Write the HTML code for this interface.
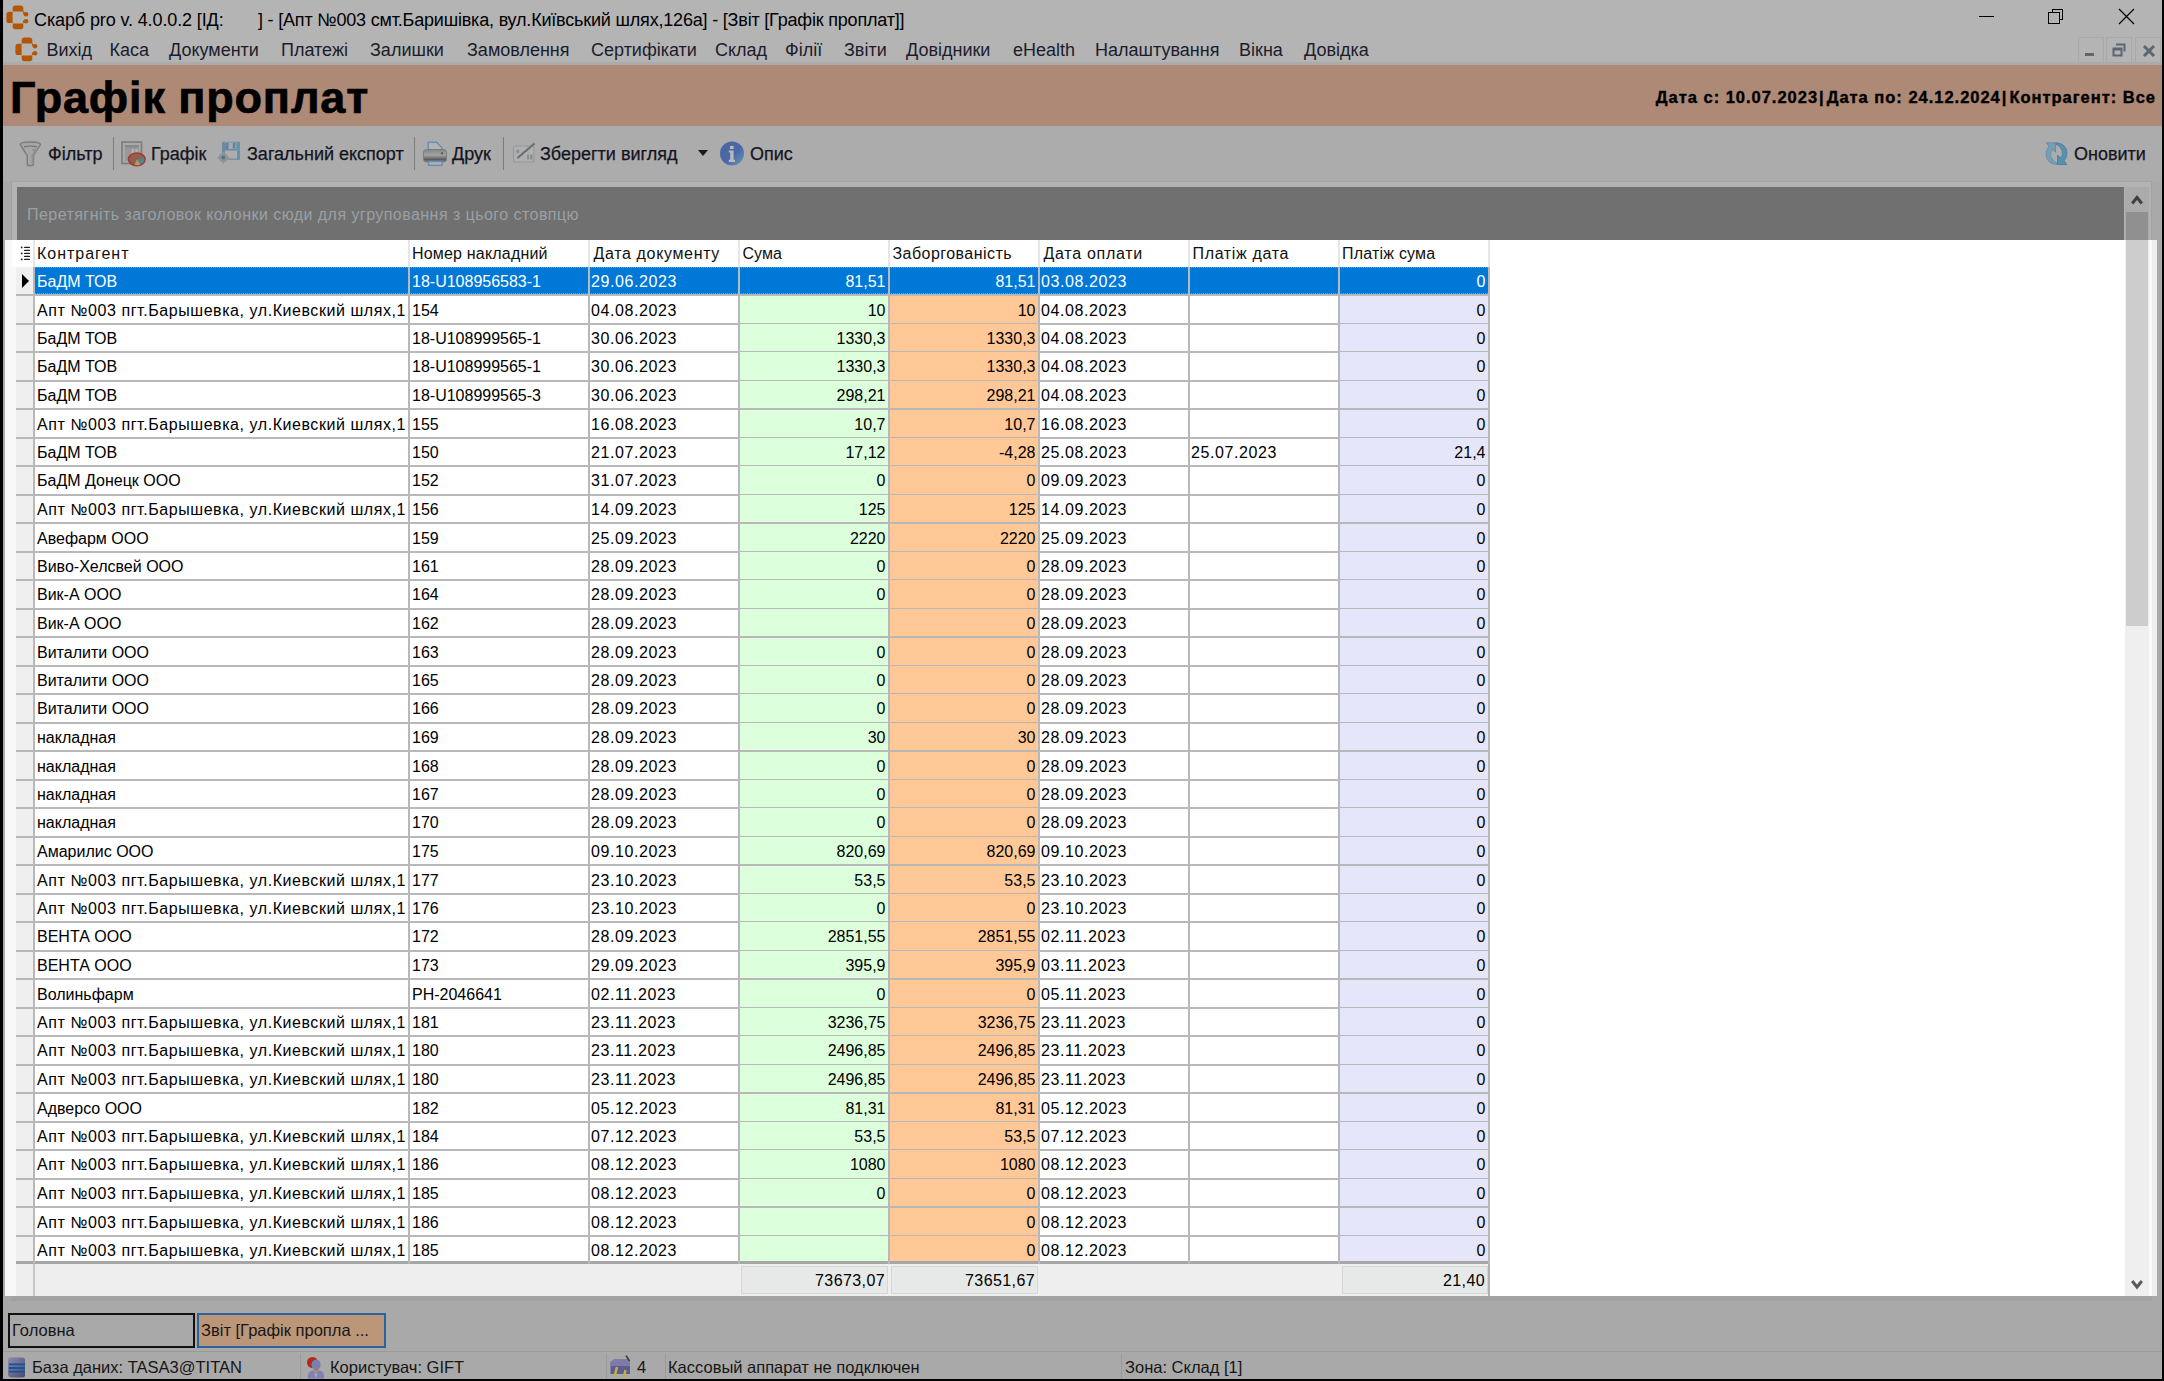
<!DOCTYPE html><html><head><meta charset="utf-8"><title>Графік проплат</title><style>
*{box-sizing:border-box;margin:0;padding:0}
html,body{width:2164px;height:1381px;overflow:hidden;background:#a9a9a9;font-family:"Liberation Sans",sans-serif;color:#000}
.a{position:absolute}
.t{position:absolute;white-space:pre;line-height:1}
</style></head><body><div class="a" style="left:0;top:0;width:2164px;height:65px;background:#b4b4b4"></div>
<div class="a" style="left:0;top:62px;width:2164px;height:3px;background:#ababab"></div>
<svg class="a" style="left:6px;top:4.5px" width="24" height="26" viewBox="0 0 24 26"><g fill="#b45503"><path d="M6.7 6.4V3.2Q6.7 0.5 9.5 0.5H14.5Q17.3 0.5 17.3 3.2V6.4Z"/><path d="M6.6 6.7H3.2Q0.4 6.7 0.4 9.8V15.2Q0.4 18.1 3.2 18.1H6.6Z"/><path d="M6.7 18.4H17.3V21.4Q17.3 24.2 14.5 24.2H9.5Q6.7 24.2 6.7 21.4Z"/><circle cx="20" cy="9.2" r="2.3"/><circle cx="20" cy="16.3" r="2.3"/><path d="M16.5 5.5L18.5 7.5L20 8L17.5 9.5Z"/><path d="M16.5 19L18.5 17L20 16.5L17.5 15Z"/></g></svg>
<svg class="a" style="left:14.6px;top:36.5px" width="24" height="26" viewBox="0 0 24 26"><g fill="#b45503"><path d="M6.7 6.4V3.2Q6.7 0.5 9.5 0.5H14.5Q17.3 0.5 17.3 3.2V6.4Z"/><path d="M6.6 6.7H3.2Q0.4 6.7 0.4 9.8V15.2Q0.4 18.1 3.2 18.1H6.6Z"/><path d="M6.7 18.4H17.3V21.4Q17.3 24.2 14.5 24.2H9.5Q6.7 24.2 6.7 21.4Z"/><circle cx="20" cy="9.2" r="2.3"/><circle cx="20" cy="16.3" r="2.3"/><path d="M16.5 5.5L18.5 7.5L20 8L17.5 9.5Z"/><path d="M16.5 19L18.5 17L20 16.5L17.5 15Z"/></g></svg>
<div class="t" style="left:34px;top:11px;font-size:18px;color:#000;letter-spacing:-0.12px">Скарб pro v. 4.0.0.2 [ІД:</div>
<div class="t" style="left:258px;top:11px;font-size:18px;color:#000;letter-spacing:-0.19px">] - [Апт №003 смт.Баришівка, вул.Київський шлях,126а] - [Звіт [Графік проплат]]</div>
<div class="a" style="left:1979px;top:16px;width:15px;height:1px;background:#000"></div>
<div class="a" style="left:2052px;top:9px;width:11px;height:11px;border:1px solid #000"></div>
<div class="a" style="left:2048px;top:12px;width:12px;height:12px;border:1px solid #000;background:#b4b4b4"></div>
<svg class="a" style="left:2118px;top:8px" width="17" height="17" viewBox="0 0 17 17"><path d="M1 1L16 16M16 1L1 16" stroke="#000" stroke-width="1.2"/></svg>
<div class="t" style="left:46.5px;top:41px;font-size:18px;color:#1c1c2c">Вихід</div>
<div class="t" style="left:109.5px;top:41px;font-size:18px;color:#1c1c2c">Каса</div>
<div class="t" style="left:169px;top:41px;font-size:18px;color:#1c1c2c">Документи</div>
<div class="t" style="left:281px;top:41px;font-size:18px;color:#1c1c2c">Платежі</div>
<div class="t" style="left:370px;top:41px;font-size:18px;color:#1c1c2c">Залишки</div>
<div class="t" style="left:467px;top:41px;font-size:18px;color:#1c1c2c">Замовлення</div>
<div class="t" style="left:591px;top:41px;font-size:18px;color:#1c1c2c">Сертифікати</div>
<div class="t" style="left:715px;top:41px;font-size:18px;color:#1c1c2c">Склад</div>
<div class="t" style="left:785px;top:41px;font-size:18px;color:#1c1c2c">Філії</div>
<div class="t" style="left:844px;top:41px;font-size:18px;color:#1c1c2c">Звіти</div>
<div class="t" style="left:906px;top:41px;font-size:18px;color:#1c1c2c">Довідники</div>
<div class="t" style="left:1013px;top:41px;font-size:18px;color:#1c1c2c">eHealth</div>
<div class="t" style="left:1095px;top:41px;font-size:18px;color:#1c1c2c">Налаштування</div>
<div class="t" style="left:1239px;top:41px;font-size:18px;color:#1c1c2c">Вікна</div>
<div class="t" style="left:1304px;top:41px;font-size:18px;color:#1c1c2c">Довідка</div>
<div class="a" style="left:2078px;top:37px;width:26px;height:26px;border:1px solid #a9a9a9;background:#b4b4b4"></div>
<div class="a" style="left:2106px;top:37px;width:26px;height:26px;border:1px solid #a9a9a9;background:#b4b4b4"></div>
<div class="a" style="left:2135px;top:37px;width:26px;height:26px;border:1px solid #a9a9a9;background:#b4b4b4"></div>
<div class="a" style="left:2085px;top:53px;width:9px;height:3px;background:#5a6670"></div>
<svg class="a" style="left:2112px;top:43px" width="14" height="14" viewBox="0 0 14 14"><path d="M4 1.5H12.5V8.5" fill="none" stroke="#5a6670" stroke-width="2"/><rect x="1.5" y="5.5" width="8" height="7" fill="none" stroke="#5a6670" stroke-width="2"/><rect x="1.5" y="5" width="8" height="2.5" fill="#5a6670"/></svg>
<svg class="a" style="left:2142px;top:44px" width="14" height="14" viewBox="0 0 14 14"><path d="M2 2L12 12M12 2L2 12" stroke="#5a6670" stroke-width="3"/></svg>
<div class="a" style="left:0;top:65px;width:2164px;height:61px;background:#ae8a76"></div>
<div class="t" style="left:10px;top:75px;font-size:45px;font-weight:bold;color:#000;letter-spacing:0.85px;word-spacing:-1px;-webkit-text-stroke:0.7px #000">Графік проплат</div>
<div class="t" style="right:8px;top:89px;font-size:16.5px;font-weight:bold;color:#000;letter-spacing:0.98px;-webkit-text-stroke:0.4px #000">Дата с: 10.07.2023<span style="margin:0 2px 0 1px">|</span>Дата по: 24.12.2024<span style="margin:0 2px 0 1px">|</span>Контрагент: Все</div>
<div class="a" style="left:0;top:126px;width:2164px;height:56px;background:#acacac"></div>
<div class="t" style="left:48px;top:145px;font-size:18px;color:#141420;-webkit-text-stroke:0.25px #141420">Фільтр</div>
<div class="t" style="left:151px;top:145px;font-size:18px;color:#141420;-webkit-text-stroke:0.25px #141420">Графік</div>
<div class="t" style="left:247px;top:145px;font-size:18px;color:#141420;-webkit-text-stroke:0.25px #141420">Загальний експорт</div>
<div class="t" style="left:452px;top:145px;font-size:18px;color:#141420;-webkit-text-stroke:0.25px #141420">Друк</div>
<div class="t" style="left:540px;top:145px;font-size:18px;color:#141420;-webkit-text-stroke:0.25px #141420">Зберегти вигляд</div>
<div class="t" style="left:750px;top:145px;font-size:18px;color:#141420;-webkit-text-stroke:0.25px #141420">Опис</div>
<div class="t" style="left:2074px;top:145px;font-size:18px;color:#141420;-webkit-text-stroke:0.25px #141420">Оновити</div>
<div class="a" style="left:113px;top:137px;width:1px;height:33px;background:#7c7c7c"></div>
<div class="a" style="left:414px;top:137px;width:1px;height:33px;background:#7c7c7c"></div>
<div class="a" style="left:503px;top:137px;width:1px;height:33px;background:#7c7c7c"></div>
<svg class="a" style="left:698px;top:150px" width="10" height="6" viewBox="0 0 10 6"><path d="M0 0H10L5 6Z" fill="#1a1a1a"/></svg>
<svg class="a" style="left:719px;top:141px" width="26" height="26" viewBox="0 0 26 26"><defs><linearGradient id="ig" x1="0" y1="0" x2="1" y2="1"><stop offset="0" stop-color="#4d66a0"/><stop offset="0.55" stop-color="#4a68a6"/><stop offset="1" stop-color="#6e96b8"/></linearGradient></defs><circle cx="13" cy="12.5" r="12" fill="url(#ig)"/><rect x="11" y="5" width="3.6" height="3" fill="#b9b9b9"/><path d="M9.8 9.6H14.6V18.8H16V21H9.8V18.8H11.2V11.6H9.8Z" fill="#b9b9b9"/></svg>
<svg class="a" style="left:19px;top:141px" width="23" height="26" viewBox="0 0 23 26"><path d="M1.2 3.5Q1.2 1 11.3 1Q21.4 1 21.4 3.5L14.5 14.5V23Q14.5 24.8 11.3 24.8Q8.2 24.8 8.2 23V14.5Z" fill="#a6a6a6" stroke="#7c7c7c" stroke-width="1.4"/><path d="M5 5.8Q11.3 4.2 17.6 5.8" fill="none" stroke="#6e6e6e" stroke-width="1.2"/><path d="M13 9L17 9L13.5 14.5V22" fill="none" stroke="#909090" stroke-width="2"/></svg>
<svg class="a" style="left:121px;top:141px" width="26" height="26" viewBox="0 0 26 26"><rect x="1" y="1" width="19.5" height="21.5" fill="#a9a9a9" stroke="#7c7c7c" stroke-width="1.6"/><rect x="4" y="4" width="14" height="16" fill="#989898"/><rect x="4" y="4" width="14" height="2.5" fill="#888"/><rect x="10.5" y="8" width="2.5" height="5" fill="#b2b2b2"/><rect x="14.5" y="8" width="2.5" height="5" fill="#b2b2b2"/><ellipse cx="15.8" cy="18.3" rx="8.3" ry="6.3" fill="#93604e" stroke="#a23a3a" stroke-width="1.6"/><path d="M16 18.5L23 16.8A7 5 0 0 1 19.5 23Z" fill="#4f8598"/><path d="M16 18.5L19.5 23.5A7 5 0 0 1 13.5 23.8Z" fill="#a4a25e"/></svg>
<svg class="a" style="left:217px;top:140px" width="26" height="26" viewBox="0 0 26 26"><rect x="5" y="1.7" width="18" height="18" rx="1" fill="#6f889e"/><rect x="19.5" y="2" width="3.5" height="17.5" fill="#6294ac"/><rect x="8" y="2.5" width="11.5" height="6.5" fill="#a6aaac"/><rect x="8.3" y="3" width="3.2" height="6" fill="#5d82a2"/><rect x="15.8" y="3" width="2.6" height="5.5" fill="#5d82a2"/><rect x="8" y="10.5" width="12" height="8" fill="#adadad"/><circle cx="6.3" cy="17.7" r="4.6" fill="#8f9496"/><path d="M6.3 11.8V23.6M0.4 17.7H12.2" stroke="#8f9496" stroke-width="2"/><circle cx="6.3" cy="17.5" r="1.9" fill="#4e7590"/></svg>
<svg class="a" style="left:422px;top:141px" width="26" height="26" viewBox="0 0 26 26"><defs><linearGradient id="pg" x1="0" y1="0" x2="0" y2="1"><stop offset="0" stop-color="#858585"/><stop offset="0.45" stop-color="#a3a3a3"/><stop offset="0.8" stop-color="#5c5c5c"/><stop offset="1" stop-color="#7c7c7c"/></linearGradient></defs><path d="M6.2 1.2H14.5L19.8 6.5V9H6.2Z" fill="#b0b4b9" stroke="#6d8db2" stroke-width="1.5"/><rect x="1.5" y="8.5" width="23" height="12.5" rx="3" fill="url(#pg)" stroke="#7c7c7c" stroke-width="1"/><circle cx="20" cy="12.3" r="1.1" fill="#4e4e4e"/><rect x="6.5" y="20.5" width="13.5" height="3.8" fill="#b0b4b9" stroke="#6d8db2" stroke-width="1.5"/></svg>
<svg class="a" style="left:512px;top:141px" width="24" height="23" viewBox="0 0 24 23"><rect x="1.5" y="5" width="20.5" height="16" rx="2" fill="#aeb0b4" stroke="#96989c" stroke-width="1.2"/><path d="M5.5 17L22.5 2.5" stroke="#6c6c68" stroke-width="2"/><ellipse cx="5.8" cy="10.5" rx="1.6" ry="2" fill="#8c8e92"/><rect x="15" y="13.5" width="2.2" height="5" fill="#7f8f9f"/><rect x="18.2" y="13.5" width="2.2" height="5" fill="#7f8f7f"/></svg>
<svg class="a" style="left:2045px;top:142px" width="23" height="23" viewBox="0 0 23 23"><path d="M1 0.8H10.5V10.3L7.5 7.3Q4.5 10.5 6 15Q7.5 19.5 12 21V22.5Q4.5 22 2 16.5Q-0.5 10.5 4 4Z" fill="#789eb6" stroke="#5a88b0" stroke-width="0.8"/><path d="M22 22.5H12.5V13L15.5 16Q18.5 12.8 17 8.3Q15.5 3.8 11 2.3V0.8Q18.5 1.3 21 6.8Q23.5 12.8 19 19Z" fill="#5890b2" stroke="#4a78a0" stroke-width="0.8"/></svg>
<div class="a" style="left:11px;top:181px;width:2141px;height:1120px;border:1px solid #a2a2a2;background:#b3b3b3"></div>
<div class="a" style="left:17px;top:187px;width:2107px;height:53px;background:#707070"></div>
<div class="t" style="left:27px;top:207px;font-size:16px;color:#9aa0a6;letter-spacing:0.45px">Перетягніть заголовок колонки сюди для угруповання з цього стовпцю</div>
<div class="a" style="left:2125px;top:187px;width:24px;height:53px;background:#ababab"></div>
<div class="a" style="left:2126px;top:212px;width:22px;height:28px;background:#909090"></div>
<svg class="a" style="left:2131px;top:194px" width="12" height="12" viewBox="0 0 12 12"><path d="M1.2 9.5L6 3.5L10.8 9.5" fill="none" stroke="#404040" stroke-width="3"/></svg>
<div class="a" style="left:5px;top:240px;width:2152px;height:1056px;background:#f8f8f8"></div>
<div class="a" style="left:16px;top:240px;width:2109px;height:1056px;background:#ffffff"></div>
<div class="a" style="left:16px;top:267px;width:17px;height:1029px;background:#efefef"></div>
<div class="a" style="left:12px;top:240px;width:21px;height:27px;background:#ffffff"></div>
<svg class="a" style="left:20px;top:246px" width="12" height="15" viewBox="0 0 12 15"><g fill="#1e1e1e"><rect x="4" y="0.7" width="6" height="1.4" rx="0.7"/><rect x="4" y="3.7" width="6" height="1.4" rx="0.7"/><rect x="4" y="6.7" width="6" height="1.4" rx="0.7"/><rect x="4" y="9.7" width="6" height="1.4" rx="0.7"/><rect x="4" y="12.7" width="6" height="1.4" rx="0.7"/><circle cx="1.7" cy="1.4" r="0.9"/><circle cx="1.7" cy="7.4" r="0.9"/><circle cx="1.7" cy="13.4" r="0.9"/></g></svg>
<div class="t" style="left:37px;top:246px;font-size:16px;color:#101010;letter-spacing:0.97px">Контрагент</div>
<div class="a" style="left:408px;top:240px;width:2px;height:27px;background:#e6e6e6"></div>
<div class="t" style="left:412px;top:246px;font-size:16px;color:#101010;letter-spacing:0.19px">Номер накладний</div>
<div class="a" style="left:588px;top:240px;width:2px;height:27px;background:#e6e6e6"></div>
<div class="t" style="left:593.5px;top:246px;font-size:16px;color:#101010;letter-spacing:0.65px">Дата документу</div>
<div class="a" style="left:738px;top:240px;width:2px;height:27px;background:#e6e6e6"></div>
<div class="t" style="left:742.5px;top:246px;font-size:16px;color:#101010;letter-spacing:0px">Сума</div>
<div class="a" style="left:888px;top:240px;width:2px;height:27px;background:#e6e6e6"></div>
<div class="t" style="left:892.5px;top:246px;font-size:16px;color:#101010;letter-spacing:0.45px">Заборгованість</div>
<div class="a" style="left:1038px;top:240px;width:2px;height:27px;background:#e6e6e6"></div>
<div class="t" style="left:1043.5px;top:246px;font-size:16px;color:#101010;letter-spacing:0.71px">Дата оплати</div>
<div class="a" style="left:1188px;top:240px;width:2px;height:27px;background:#e6e6e6"></div>
<div class="t" style="left:1192.5px;top:246px;font-size:16px;color:#101010;letter-spacing:0.65px">Платіж дата</div>
<div class="a" style="left:1338px;top:240px;width:2px;height:27px;background:#e6e6e6"></div>
<div class="t" style="left:1342px;top:246px;font-size:16px;color:#101010;letter-spacing:0.21px">Платіж сума</div>
<div class="a" style="left:1488px;top:240px;width:2px;height:27px;background:#e6e6e6"></div>
<div class="a" style="left:33px;top:240px;width:2px;height:27px;background:#e6e6e6"></div>
<div class="a" style="left:35px;top:267px;width:373px;height:27px;background:#0078d7"></div>
<div class="t" style="left:37px;top:274px;font-size:16px;color:#ffffff">БаДМ ТОВ</div>
<div class="a" style="left:410px;top:267px;width:178px;height:27px;background:#0078d7"></div>
<div class="t" style="left:412px;top:274px;font-size:16px;color:#ffffff">18-U108956583-1</div>
<div class="a" style="left:590px;top:267px;width:148px;height:27px;background:#0078d7"></div>
<div class="t" style="left:591px;top:274px;font-size:16px;color:#ffffff;letter-spacing:0.6px">29.06.2023</div>
<div class="a" style="left:740px;top:267px;width:148px;height:27px;background:#0078d7"></div>
<div class="t" style="left:740px;top:274px;width:145.5px;text-align:right;font-size:16px;color:#ffffff">81,51</div>
<div class="a" style="left:890px;top:267px;width:148px;height:27px;background:#0078d7"></div>
<div class="t" style="left:890px;top:274px;width:145.5px;text-align:right;font-size:16px;color:#ffffff">81,51</div>
<div class="a" style="left:1040px;top:267px;width:148px;height:27px;background:#0078d7"></div>
<div class="t" style="left:1041px;top:274px;font-size:16px;color:#ffffff;letter-spacing:0.6px">03.08.2023</div>
<div class="a" style="left:1190px;top:267px;width:148px;height:27px;background:#0078d7"></div>
<div class="a" style="left:1340px;top:267px;width:148px;height:27px;background:#0078d7"></div>
<div class="t" style="left:1340px;top:274px;width:145.5px;text-align:right;font-size:16px;color:#ffffff">0</div>
<div class="a" style="left:16px;top:294px;width:1474px;height:2px;background:#b8b8b8"></div>
<div class="t" style="left:37px;top:303px;font-size:16px;color:#000;letter-spacing:0.56px">Апт №003 пгт.Барышевка, ул.Киевский шлях,1</div>
<div class="t" style="left:412px;top:303px;font-size:16px;color:#000">154</div>
<div class="t" style="left:591px;top:303px;font-size:16px;color:#000;letter-spacing:0.6px">04.08.2023</div>
<div class="a" style="left:740px;top:296px;width:148px;height:27px;background:#dcffdc"></div>
<div class="t" style="left:740px;top:303px;width:145.5px;text-align:right;font-size:16px;color:#000">10</div>
<div class="a" style="left:890px;top:296px;width:148px;height:27px;background:#ffc896"></div>
<div class="t" style="left:890px;top:303px;width:145.5px;text-align:right;font-size:16px;color:#000">10</div>
<div class="t" style="left:1041px;top:303px;font-size:16px;color:#000;letter-spacing:0.6px">04.08.2023</div>
<div class="a" style="left:1340px;top:296px;width:148px;height:27px;background:#e6e6fa"></div>
<div class="t" style="left:1340px;top:303px;width:145.5px;text-align:right;font-size:16px;color:#000">0</div>
<div class="a" style="left:16px;top:323px;width:1474px;height:2px;background:#b8b8b8"></div>
<div class="t" style="left:37px;top:331px;font-size:16px;color:#000">БаДМ ТОВ</div>
<div class="t" style="left:412px;top:331px;font-size:16px;color:#000">18-U108999565-1</div>
<div class="t" style="left:591px;top:331px;font-size:16px;color:#000;letter-spacing:0.6px">30.06.2023</div>
<div class="a" style="left:740px;top:324px;width:148px;height:27px;background:#dcffdc"></div>
<div class="t" style="left:740px;top:331px;width:145.5px;text-align:right;font-size:16px;color:#000">1330,3</div>
<div class="a" style="left:890px;top:324px;width:148px;height:27px;background:#ffc896"></div>
<div class="t" style="left:890px;top:331px;width:145.5px;text-align:right;font-size:16px;color:#000">1330,3</div>
<div class="t" style="left:1041px;top:331px;font-size:16px;color:#000;letter-spacing:0.6px">04.08.2023</div>
<div class="a" style="left:1340px;top:324px;width:148px;height:27px;background:#e6e6fa"></div>
<div class="t" style="left:1340px;top:331px;width:145.5px;text-align:right;font-size:16px;color:#000">0</div>
<div class="a" style="left:16px;top:351px;width:1474px;height:2px;background:#b8b8b8"></div>
<div class="t" style="left:37px;top:359px;font-size:16px;color:#000">БаДМ ТОВ</div>
<div class="t" style="left:412px;top:359px;font-size:16px;color:#000">18-U108999565-1</div>
<div class="t" style="left:591px;top:359px;font-size:16px;color:#000;letter-spacing:0.6px">30.06.2023</div>
<div class="a" style="left:740px;top:352px;width:148px;height:28px;background:#dcffdc"></div>
<div class="t" style="left:740px;top:359px;width:145.5px;text-align:right;font-size:16px;color:#000">1330,3</div>
<div class="a" style="left:890px;top:352px;width:148px;height:28px;background:#ffc896"></div>
<div class="t" style="left:890px;top:359px;width:145.5px;text-align:right;font-size:16px;color:#000">1330,3</div>
<div class="t" style="left:1041px;top:359px;font-size:16px;color:#000;letter-spacing:0.6px">04.08.2023</div>
<div class="a" style="left:1340px;top:352px;width:148px;height:28px;background:#e6e6fa"></div>
<div class="t" style="left:1340px;top:359px;width:145.5px;text-align:right;font-size:16px;color:#000">0</div>
<div class="a" style="left:16px;top:380px;width:1474px;height:2px;background:#b8b8b8"></div>
<div class="t" style="left:37px;top:388px;font-size:16px;color:#000">БаДМ ТОВ</div>
<div class="t" style="left:412px;top:388px;font-size:16px;color:#000">18-U108999565-3</div>
<div class="t" style="left:591px;top:388px;font-size:16px;color:#000;letter-spacing:0.6px">30.06.2023</div>
<div class="a" style="left:740px;top:381px;width:148px;height:27px;background:#dcffdc"></div>
<div class="t" style="left:740px;top:388px;width:145.5px;text-align:right;font-size:16px;color:#000">298,21</div>
<div class="a" style="left:890px;top:381px;width:148px;height:27px;background:#ffc896"></div>
<div class="t" style="left:890px;top:388px;width:145.5px;text-align:right;font-size:16px;color:#000">298,21</div>
<div class="t" style="left:1041px;top:388px;font-size:16px;color:#000;letter-spacing:0.6px">04.08.2023</div>
<div class="a" style="left:1340px;top:381px;width:148px;height:27px;background:#e6e6fa"></div>
<div class="t" style="left:1340px;top:388px;width:145.5px;text-align:right;font-size:16px;color:#000">0</div>
<div class="a" style="left:16px;top:408px;width:1474px;height:2px;background:#b8b8b8"></div>
<div class="t" style="left:37px;top:417px;font-size:16px;color:#000;letter-spacing:0.56px">Апт №003 пгт.Барышевка, ул.Киевский шлях,1</div>
<div class="t" style="left:412px;top:417px;font-size:16px;color:#000">155</div>
<div class="t" style="left:591px;top:417px;font-size:16px;color:#000;letter-spacing:0.6px">16.08.2023</div>
<div class="a" style="left:740px;top:410px;width:148px;height:27px;background:#dcffdc"></div>
<div class="t" style="left:740px;top:417px;width:145.5px;text-align:right;font-size:16px;color:#000">10,7</div>
<div class="a" style="left:890px;top:410px;width:148px;height:27px;background:#ffc896"></div>
<div class="t" style="left:890px;top:417px;width:145.5px;text-align:right;font-size:16px;color:#000">10,7</div>
<div class="t" style="left:1041px;top:417px;font-size:16px;color:#000;letter-spacing:0.6px">16.08.2023</div>
<div class="a" style="left:1340px;top:410px;width:148px;height:27px;background:#e6e6fa"></div>
<div class="t" style="left:1340px;top:417px;width:145.5px;text-align:right;font-size:16px;color:#000">0</div>
<div class="a" style="left:16px;top:437px;width:1474px;height:2px;background:#b8b8b8"></div>
<div class="t" style="left:37px;top:445px;font-size:16px;color:#000">БаДМ ТОВ</div>
<div class="t" style="left:412px;top:445px;font-size:16px;color:#000">150</div>
<div class="t" style="left:591px;top:445px;font-size:16px;color:#000;letter-spacing:0.6px">21.07.2023</div>
<div class="a" style="left:740px;top:438px;width:148px;height:27px;background:#dcffdc"></div>
<div class="t" style="left:740px;top:445px;width:145.5px;text-align:right;font-size:16px;color:#000">17,12</div>
<div class="a" style="left:890px;top:438px;width:148px;height:27px;background:#ffc896"></div>
<div class="t" style="left:890px;top:445px;width:145.5px;text-align:right;font-size:16px;color:#000">-4,28</div>
<div class="t" style="left:1041px;top:445px;font-size:16px;color:#000;letter-spacing:0.6px">25.08.2023</div>
<div class="t" style="left:1191px;top:445px;font-size:16px;color:#000;letter-spacing:0.6px">25.07.2023</div>
<div class="a" style="left:1340px;top:438px;width:148px;height:27px;background:#e6e6fa"></div>
<div class="t" style="left:1340px;top:445px;width:145.5px;text-align:right;font-size:16px;color:#000">21,4</div>
<div class="a" style="left:16px;top:465px;width:1474px;height:2px;background:#b8b8b8"></div>
<div class="t" style="left:37px;top:473px;font-size:16px;color:#000">БаДМ Донецк ООО</div>
<div class="t" style="left:412px;top:473px;font-size:16px;color:#000">152</div>
<div class="t" style="left:591px;top:473px;font-size:16px;color:#000;letter-spacing:0.6px">31.07.2023</div>
<div class="a" style="left:740px;top:466px;width:148px;height:28px;background:#dcffdc"></div>
<div class="t" style="left:740px;top:473px;width:145.5px;text-align:right;font-size:16px;color:#000">0</div>
<div class="a" style="left:890px;top:466px;width:148px;height:28px;background:#ffc896"></div>
<div class="t" style="left:890px;top:473px;width:145.5px;text-align:right;font-size:16px;color:#000">0</div>
<div class="t" style="left:1041px;top:473px;font-size:16px;color:#000;letter-spacing:0.6px">09.09.2023</div>
<div class="a" style="left:1340px;top:466px;width:148px;height:28px;background:#e6e6fa"></div>
<div class="t" style="left:1340px;top:473px;width:145.5px;text-align:right;font-size:16px;color:#000">0</div>
<div class="a" style="left:16px;top:494px;width:1474px;height:2px;background:#b8b8b8"></div>
<div class="t" style="left:37px;top:502px;font-size:16px;color:#000;letter-spacing:0.56px">Апт №003 пгт.Барышевка, ул.Киевский шлях,1</div>
<div class="t" style="left:412px;top:502px;font-size:16px;color:#000">156</div>
<div class="t" style="left:591px;top:502px;font-size:16px;color:#000;letter-spacing:0.6px">14.09.2023</div>
<div class="a" style="left:740px;top:495px;width:148px;height:27px;background:#dcffdc"></div>
<div class="t" style="left:740px;top:502px;width:145.5px;text-align:right;font-size:16px;color:#000">125</div>
<div class="a" style="left:890px;top:495px;width:148px;height:27px;background:#ffc896"></div>
<div class="t" style="left:890px;top:502px;width:145.5px;text-align:right;font-size:16px;color:#000">125</div>
<div class="t" style="left:1041px;top:502px;font-size:16px;color:#000;letter-spacing:0.6px">14.09.2023</div>
<div class="a" style="left:1340px;top:495px;width:148px;height:27px;background:#e6e6fa"></div>
<div class="t" style="left:1340px;top:502px;width:145.5px;text-align:right;font-size:16px;color:#000">0</div>
<div class="a" style="left:16px;top:522px;width:1474px;height:2px;background:#b8b8b8"></div>
<div class="t" style="left:37px;top:531px;font-size:16px;color:#000">Авефарм ООО</div>
<div class="t" style="left:412px;top:531px;font-size:16px;color:#000">159</div>
<div class="t" style="left:591px;top:531px;font-size:16px;color:#000;letter-spacing:0.6px">25.09.2023</div>
<div class="a" style="left:740px;top:524px;width:148px;height:27px;background:#dcffdc"></div>
<div class="t" style="left:740px;top:531px;width:145.5px;text-align:right;font-size:16px;color:#000">2220</div>
<div class="a" style="left:890px;top:524px;width:148px;height:27px;background:#ffc896"></div>
<div class="t" style="left:890px;top:531px;width:145.5px;text-align:right;font-size:16px;color:#000">2220</div>
<div class="t" style="left:1041px;top:531px;font-size:16px;color:#000;letter-spacing:0.6px">25.09.2023</div>
<div class="a" style="left:1340px;top:524px;width:148px;height:27px;background:#e6e6fa"></div>
<div class="t" style="left:1340px;top:531px;width:145.5px;text-align:right;font-size:16px;color:#000">0</div>
<div class="a" style="left:16px;top:551px;width:1474px;height:2px;background:#b8b8b8"></div>
<div class="t" style="left:37px;top:559px;font-size:16px;color:#000">Виво-Хелсвей ООО</div>
<div class="t" style="left:412px;top:559px;font-size:16px;color:#000">161</div>
<div class="t" style="left:591px;top:559px;font-size:16px;color:#000;letter-spacing:0.6px">28.09.2023</div>
<div class="a" style="left:740px;top:552px;width:148px;height:27px;background:#dcffdc"></div>
<div class="t" style="left:740px;top:559px;width:145.5px;text-align:right;font-size:16px;color:#000">0</div>
<div class="a" style="left:890px;top:552px;width:148px;height:27px;background:#ffc896"></div>
<div class="t" style="left:890px;top:559px;width:145.5px;text-align:right;font-size:16px;color:#000">0</div>
<div class="t" style="left:1041px;top:559px;font-size:16px;color:#000;letter-spacing:0.6px">28.09.2023</div>
<div class="a" style="left:1340px;top:552px;width:148px;height:27px;background:#e6e6fa"></div>
<div class="t" style="left:1340px;top:559px;width:145.5px;text-align:right;font-size:16px;color:#000">0</div>
<div class="a" style="left:16px;top:579px;width:1474px;height:2px;background:#b8b8b8"></div>
<div class="t" style="left:37px;top:587px;font-size:16px;color:#000">Вик-А ООО</div>
<div class="t" style="left:412px;top:587px;font-size:16px;color:#000">164</div>
<div class="t" style="left:591px;top:587px;font-size:16px;color:#000;letter-spacing:0.6px">28.09.2023</div>
<div class="a" style="left:740px;top:580px;width:148px;height:28px;background:#dcffdc"></div>
<div class="t" style="left:740px;top:587px;width:145.5px;text-align:right;font-size:16px;color:#000">0</div>
<div class="a" style="left:890px;top:580px;width:148px;height:28px;background:#ffc896"></div>
<div class="t" style="left:890px;top:587px;width:145.5px;text-align:right;font-size:16px;color:#000">0</div>
<div class="t" style="left:1041px;top:587px;font-size:16px;color:#000;letter-spacing:0.6px">28.09.2023</div>
<div class="a" style="left:1340px;top:580px;width:148px;height:28px;background:#e6e6fa"></div>
<div class="t" style="left:1340px;top:587px;width:145.5px;text-align:right;font-size:16px;color:#000">0</div>
<div class="a" style="left:16px;top:608px;width:1474px;height:2px;background:#b8b8b8"></div>
<div class="t" style="left:37px;top:616px;font-size:16px;color:#000">Вик-А ООО</div>
<div class="t" style="left:412px;top:616px;font-size:16px;color:#000">162</div>
<div class="t" style="left:591px;top:616px;font-size:16px;color:#000;letter-spacing:0.6px">28.09.2023</div>
<div class="a" style="left:740px;top:609px;width:148px;height:27px;background:#dcffdc"></div>
<div class="a" style="left:890px;top:609px;width:148px;height:27px;background:#ffc896"></div>
<div class="t" style="left:890px;top:616px;width:145.5px;text-align:right;font-size:16px;color:#000">0</div>
<div class="t" style="left:1041px;top:616px;font-size:16px;color:#000;letter-spacing:0.6px">28.09.2023</div>
<div class="a" style="left:1340px;top:609px;width:148px;height:27px;background:#e6e6fa"></div>
<div class="t" style="left:1340px;top:616px;width:145.5px;text-align:right;font-size:16px;color:#000">0</div>
<div class="a" style="left:16px;top:636px;width:1474px;height:2px;background:#b8b8b8"></div>
<div class="t" style="left:37px;top:645px;font-size:16px;color:#000">Виталити ООО</div>
<div class="t" style="left:412px;top:645px;font-size:16px;color:#000">163</div>
<div class="t" style="left:591px;top:645px;font-size:16px;color:#000;letter-spacing:0.6px">28.09.2023</div>
<div class="a" style="left:740px;top:638px;width:148px;height:27px;background:#dcffdc"></div>
<div class="t" style="left:740px;top:645px;width:145.5px;text-align:right;font-size:16px;color:#000">0</div>
<div class="a" style="left:890px;top:638px;width:148px;height:27px;background:#ffc896"></div>
<div class="t" style="left:890px;top:645px;width:145.5px;text-align:right;font-size:16px;color:#000">0</div>
<div class="t" style="left:1041px;top:645px;font-size:16px;color:#000;letter-spacing:0.6px">28.09.2023</div>
<div class="a" style="left:1340px;top:638px;width:148px;height:27px;background:#e6e6fa"></div>
<div class="t" style="left:1340px;top:645px;width:145.5px;text-align:right;font-size:16px;color:#000">0</div>
<div class="a" style="left:16px;top:665px;width:1474px;height:2px;background:#b8b8b8"></div>
<div class="t" style="left:37px;top:673px;font-size:16px;color:#000">Виталити ООО</div>
<div class="t" style="left:412px;top:673px;font-size:16px;color:#000">165</div>
<div class="t" style="left:591px;top:673px;font-size:16px;color:#000;letter-spacing:0.6px">28.09.2023</div>
<div class="a" style="left:740px;top:666px;width:148px;height:27px;background:#dcffdc"></div>
<div class="t" style="left:740px;top:673px;width:145.5px;text-align:right;font-size:16px;color:#000">0</div>
<div class="a" style="left:890px;top:666px;width:148px;height:27px;background:#ffc896"></div>
<div class="t" style="left:890px;top:673px;width:145.5px;text-align:right;font-size:16px;color:#000">0</div>
<div class="t" style="left:1041px;top:673px;font-size:16px;color:#000;letter-spacing:0.6px">28.09.2023</div>
<div class="a" style="left:1340px;top:666px;width:148px;height:27px;background:#e6e6fa"></div>
<div class="t" style="left:1340px;top:673px;width:145.5px;text-align:right;font-size:16px;color:#000">0</div>
<div class="a" style="left:16px;top:693px;width:1474px;height:2px;background:#b8b8b8"></div>
<div class="t" style="left:37px;top:701px;font-size:16px;color:#000">Виталити ООО</div>
<div class="t" style="left:412px;top:701px;font-size:16px;color:#000">166</div>
<div class="t" style="left:591px;top:701px;font-size:16px;color:#000;letter-spacing:0.6px">28.09.2023</div>
<div class="a" style="left:740px;top:694px;width:148px;height:28px;background:#dcffdc"></div>
<div class="t" style="left:740px;top:701px;width:145.5px;text-align:right;font-size:16px;color:#000">0</div>
<div class="a" style="left:890px;top:694px;width:148px;height:28px;background:#ffc896"></div>
<div class="t" style="left:890px;top:701px;width:145.5px;text-align:right;font-size:16px;color:#000">0</div>
<div class="t" style="left:1041px;top:701px;font-size:16px;color:#000;letter-spacing:0.6px">28.09.2023</div>
<div class="a" style="left:1340px;top:694px;width:148px;height:28px;background:#e6e6fa"></div>
<div class="t" style="left:1340px;top:701px;width:145.5px;text-align:right;font-size:16px;color:#000">0</div>
<div class="a" style="left:16px;top:722px;width:1474px;height:2px;background:#b8b8b8"></div>
<div class="t" style="left:37px;top:730px;font-size:16px;color:#000">накладная</div>
<div class="t" style="left:412px;top:730px;font-size:16px;color:#000">169</div>
<div class="t" style="left:591px;top:730px;font-size:16px;color:#000;letter-spacing:0.6px">28.09.2023</div>
<div class="a" style="left:740px;top:723px;width:148px;height:27px;background:#dcffdc"></div>
<div class="t" style="left:740px;top:730px;width:145.5px;text-align:right;font-size:16px;color:#000">30</div>
<div class="a" style="left:890px;top:723px;width:148px;height:27px;background:#ffc896"></div>
<div class="t" style="left:890px;top:730px;width:145.5px;text-align:right;font-size:16px;color:#000">30</div>
<div class="t" style="left:1041px;top:730px;font-size:16px;color:#000;letter-spacing:0.6px">28.09.2023</div>
<div class="a" style="left:1340px;top:723px;width:148px;height:27px;background:#e6e6fa"></div>
<div class="t" style="left:1340px;top:730px;width:145.5px;text-align:right;font-size:16px;color:#000">0</div>
<div class="a" style="left:16px;top:750px;width:1474px;height:2px;background:#b8b8b8"></div>
<div class="t" style="left:37px;top:759px;font-size:16px;color:#000">накладная</div>
<div class="t" style="left:412px;top:759px;font-size:16px;color:#000">168</div>
<div class="t" style="left:591px;top:759px;font-size:16px;color:#000;letter-spacing:0.6px">28.09.2023</div>
<div class="a" style="left:740px;top:752px;width:148px;height:27px;background:#dcffdc"></div>
<div class="t" style="left:740px;top:759px;width:145.5px;text-align:right;font-size:16px;color:#000">0</div>
<div class="a" style="left:890px;top:752px;width:148px;height:27px;background:#ffc896"></div>
<div class="t" style="left:890px;top:759px;width:145.5px;text-align:right;font-size:16px;color:#000">0</div>
<div class="t" style="left:1041px;top:759px;font-size:16px;color:#000;letter-spacing:0.6px">28.09.2023</div>
<div class="a" style="left:1340px;top:752px;width:148px;height:27px;background:#e6e6fa"></div>
<div class="t" style="left:1340px;top:759px;width:145.5px;text-align:right;font-size:16px;color:#000">0</div>
<div class="a" style="left:16px;top:779px;width:1474px;height:2px;background:#b8b8b8"></div>
<div class="t" style="left:37px;top:787px;font-size:16px;color:#000">накладная</div>
<div class="t" style="left:412px;top:787px;font-size:16px;color:#000">167</div>
<div class="t" style="left:591px;top:787px;font-size:16px;color:#000;letter-spacing:0.6px">28.09.2023</div>
<div class="a" style="left:740px;top:780px;width:148px;height:27px;background:#dcffdc"></div>
<div class="t" style="left:740px;top:787px;width:145.5px;text-align:right;font-size:16px;color:#000">0</div>
<div class="a" style="left:890px;top:780px;width:148px;height:27px;background:#ffc896"></div>
<div class="t" style="left:890px;top:787px;width:145.5px;text-align:right;font-size:16px;color:#000">0</div>
<div class="t" style="left:1041px;top:787px;font-size:16px;color:#000;letter-spacing:0.6px">28.09.2023</div>
<div class="a" style="left:1340px;top:780px;width:148px;height:27px;background:#e6e6fa"></div>
<div class="t" style="left:1340px;top:787px;width:145.5px;text-align:right;font-size:16px;color:#000">0</div>
<div class="a" style="left:16px;top:807px;width:1474px;height:2px;background:#b8b8b8"></div>
<div class="t" style="left:37px;top:815px;font-size:16px;color:#000">накладная</div>
<div class="t" style="left:412px;top:815px;font-size:16px;color:#000">170</div>
<div class="t" style="left:591px;top:815px;font-size:16px;color:#000;letter-spacing:0.6px">28.09.2023</div>
<div class="a" style="left:740px;top:808px;width:148px;height:28px;background:#dcffdc"></div>
<div class="t" style="left:740px;top:815px;width:145.5px;text-align:right;font-size:16px;color:#000">0</div>
<div class="a" style="left:890px;top:808px;width:148px;height:28px;background:#ffc896"></div>
<div class="t" style="left:890px;top:815px;width:145.5px;text-align:right;font-size:16px;color:#000">0</div>
<div class="t" style="left:1041px;top:815px;font-size:16px;color:#000;letter-spacing:0.6px">28.09.2023</div>
<div class="a" style="left:1340px;top:808px;width:148px;height:28px;background:#e6e6fa"></div>
<div class="t" style="left:1340px;top:815px;width:145.5px;text-align:right;font-size:16px;color:#000">0</div>
<div class="a" style="left:16px;top:836px;width:1474px;height:2px;background:#b8b8b8"></div>
<div class="t" style="left:37px;top:844px;font-size:16px;color:#000">Амарилис ООО</div>
<div class="t" style="left:412px;top:844px;font-size:16px;color:#000">175</div>
<div class="t" style="left:591px;top:844px;font-size:16px;color:#000;letter-spacing:0.6px">09.10.2023</div>
<div class="a" style="left:740px;top:837px;width:148px;height:27px;background:#dcffdc"></div>
<div class="t" style="left:740px;top:844px;width:145.5px;text-align:right;font-size:16px;color:#000">820,69</div>
<div class="a" style="left:890px;top:837px;width:148px;height:27px;background:#ffc896"></div>
<div class="t" style="left:890px;top:844px;width:145.5px;text-align:right;font-size:16px;color:#000">820,69</div>
<div class="t" style="left:1041px;top:844px;font-size:16px;color:#000;letter-spacing:0.6px">09.10.2023</div>
<div class="a" style="left:1340px;top:837px;width:148px;height:27px;background:#e6e6fa"></div>
<div class="t" style="left:1340px;top:844px;width:145.5px;text-align:right;font-size:16px;color:#000">0</div>
<div class="a" style="left:16px;top:864px;width:1474px;height:2px;background:#b8b8b8"></div>
<div class="t" style="left:37px;top:873px;font-size:16px;color:#000;letter-spacing:0.56px">Апт №003 пгт.Барышевка, ул.Киевский шлях,1</div>
<div class="t" style="left:412px;top:873px;font-size:16px;color:#000">177</div>
<div class="t" style="left:591px;top:873px;font-size:16px;color:#000;letter-spacing:0.6px">23.10.2023</div>
<div class="a" style="left:740px;top:866px;width:148px;height:27px;background:#dcffdc"></div>
<div class="t" style="left:740px;top:873px;width:145.5px;text-align:right;font-size:16px;color:#000">53,5</div>
<div class="a" style="left:890px;top:866px;width:148px;height:27px;background:#ffc896"></div>
<div class="t" style="left:890px;top:873px;width:145.5px;text-align:right;font-size:16px;color:#000">53,5</div>
<div class="t" style="left:1041px;top:873px;font-size:16px;color:#000;letter-spacing:0.6px">23.10.2023</div>
<div class="a" style="left:1340px;top:866px;width:148px;height:27px;background:#e6e6fa"></div>
<div class="t" style="left:1340px;top:873px;width:145.5px;text-align:right;font-size:16px;color:#000">0</div>
<div class="a" style="left:16px;top:893px;width:1474px;height:2px;background:#b8b8b8"></div>
<div class="t" style="left:37px;top:901px;font-size:16px;color:#000;letter-spacing:0.56px">Апт №003 пгт.Барышевка, ул.Киевский шлях,1</div>
<div class="t" style="left:412px;top:901px;font-size:16px;color:#000">176</div>
<div class="t" style="left:591px;top:901px;font-size:16px;color:#000;letter-spacing:0.6px">23.10.2023</div>
<div class="a" style="left:740px;top:894px;width:148px;height:27px;background:#dcffdc"></div>
<div class="t" style="left:740px;top:901px;width:145.5px;text-align:right;font-size:16px;color:#000">0</div>
<div class="a" style="left:890px;top:894px;width:148px;height:27px;background:#ffc896"></div>
<div class="t" style="left:890px;top:901px;width:145.5px;text-align:right;font-size:16px;color:#000">0</div>
<div class="t" style="left:1041px;top:901px;font-size:16px;color:#000;letter-spacing:0.6px">23.10.2023</div>
<div class="a" style="left:1340px;top:894px;width:148px;height:27px;background:#e6e6fa"></div>
<div class="t" style="left:1340px;top:901px;width:145.5px;text-align:right;font-size:16px;color:#000">0</div>
<div class="a" style="left:16px;top:921px;width:1474px;height:2px;background:#b8b8b8"></div>
<div class="t" style="left:37px;top:929px;font-size:16px;color:#000">ВЕНТА ООО</div>
<div class="t" style="left:412px;top:929px;font-size:16px;color:#000">172</div>
<div class="t" style="left:591px;top:929px;font-size:16px;color:#000;letter-spacing:0.6px">28.09.2023</div>
<div class="a" style="left:740px;top:922px;width:148px;height:28px;background:#dcffdc"></div>
<div class="t" style="left:740px;top:929px;width:145.5px;text-align:right;font-size:16px;color:#000">2851,55</div>
<div class="a" style="left:890px;top:922px;width:148px;height:28px;background:#ffc896"></div>
<div class="t" style="left:890px;top:929px;width:145.5px;text-align:right;font-size:16px;color:#000">2851,55</div>
<div class="t" style="left:1041px;top:929px;font-size:16px;color:#000;letter-spacing:0.6px">02.11.2023</div>
<div class="a" style="left:1340px;top:922px;width:148px;height:28px;background:#e6e6fa"></div>
<div class="t" style="left:1340px;top:929px;width:145.5px;text-align:right;font-size:16px;color:#000">0</div>
<div class="a" style="left:16px;top:950px;width:1474px;height:2px;background:#b8b8b8"></div>
<div class="t" style="left:37px;top:958px;font-size:16px;color:#000">ВЕНТА ООО</div>
<div class="t" style="left:412px;top:958px;font-size:16px;color:#000">173</div>
<div class="t" style="left:591px;top:958px;font-size:16px;color:#000;letter-spacing:0.6px">29.09.2023</div>
<div class="a" style="left:740px;top:951px;width:148px;height:27px;background:#dcffdc"></div>
<div class="t" style="left:740px;top:958px;width:145.5px;text-align:right;font-size:16px;color:#000">395,9</div>
<div class="a" style="left:890px;top:951px;width:148px;height:27px;background:#ffc896"></div>
<div class="t" style="left:890px;top:958px;width:145.5px;text-align:right;font-size:16px;color:#000">395,9</div>
<div class="t" style="left:1041px;top:958px;font-size:16px;color:#000;letter-spacing:0.6px">03.11.2023</div>
<div class="a" style="left:1340px;top:951px;width:148px;height:27px;background:#e6e6fa"></div>
<div class="t" style="left:1340px;top:958px;width:145.5px;text-align:right;font-size:16px;color:#000">0</div>
<div class="a" style="left:16px;top:978px;width:1474px;height:2px;background:#b8b8b8"></div>
<div class="t" style="left:37px;top:987px;font-size:16px;color:#000">Волиньфарм</div>
<div class="t" style="left:412px;top:987px;font-size:16px;color:#000">РН-2046641</div>
<div class="t" style="left:591px;top:987px;font-size:16px;color:#000;letter-spacing:0.6px">02.11.2023</div>
<div class="a" style="left:740px;top:980px;width:148px;height:27px;background:#dcffdc"></div>
<div class="t" style="left:740px;top:987px;width:145.5px;text-align:right;font-size:16px;color:#000">0</div>
<div class="a" style="left:890px;top:980px;width:148px;height:27px;background:#ffc896"></div>
<div class="t" style="left:890px;top:987px;width:145.5px;text-align:right;font-size:16px;color:#000">0</div>
<div class="t" style="left:1041px;top:987px;font-size:16px;color:#000;letter-spacing:0.6px">05.11.2023</div>
<div class="a" style="left:1340px;top:980px;width:148px;height:27px;background:#e6e6fa"></div>
<div class="t" style="left:1340px;top:987px;width:145.5px;text-align:right;font-size:16px;color:#000">0</div>
<div class="a" style="left:16px;top:1007px;width:1474px;height:2px;background:#b8b8b8"></div>
<div class="t" style="left:37px;top:1015px;font-size:16px;color:#000;letter-spacing:0.56px">Апт №003 пгт.Барышевка, ул.Киевский шлях,1</div>
<div class="t" style="left:412px;top:1015px;font-size:16px;color:#000">181</div>
<div class="t" style="left:591px;top:1015px;font-size:16px;color:#000;letter-spacing:0.6px">23.11.2023</div>
<div class="a" style="left:740px;top:1008px;width:148px;height:27px;background:#dcffdc"></div>
<div class="t" style="left:740px;top:1015px;width:145.5px;text-align:right;font-size:16px;color:#000">3236,75</div>
<div class="a" style="left:890px;top:1008px;width:148px;height:27px;background:#ffc896"></div>
<div class="t" style="left:890px;top:1015px;width:145.5px;text-align:right;font-size:16px;color:#000">3236,75</div>
<div class="t" style="left:1041px;top:1015px;font-size:16px;color:#000;letter-spacing:0.6px">23.11.2023</div>
<div class="a" style="left:1340px;top:1008px;width:148px;height:27px;background:#e6e6fa"></div>
<div class="t" style="left:1340px;top:1015px;width:145.5px;text-align:right;font-size:16px;color:#000">0</div>
<div class="a" style="left:16px;top:1035px;width:1474px;height:2px;background:#b8b8b8"></div>
<div class="t" style="left:37px;top:1043px;font-size:16px;color:#000;letter-spacing:0.56px">Апт №003 пгт.Барышевка, ул.Киевский шлях,1</div>
<div class="t" style="left:412px;top:1043px;font-size:16px;color:#000">180</div>
<div class="t" style="left:591px;top:1043px;font-size:16px;color:#000;letter-spacing:0.6px">23.11.2023</div>
<div class="a" style="left:740px;top:1036px;width:148px;height:28px;background:#dcffdc"></div>
<div class="t" style="left:740px;top:1043px;width:145.5px;text-align:right;font-size:16px;color:#000">2496,85</div>
<div class="a" style="left:890px;top:1036px;width:148px;height:28px;background:#ffc896"></div>
<div class="t" style="left:890px;top:1043px;width:145.5px;text-align:right;font-size:16px;color:#000">2496,85</div>
<div class="t" style="left:1041px;top:1043px;font-size:16px;color:#000;letter-spacing:0.6px">23.11.2023</div>
<div class="a" style="left:1340px;top:1036px;width:148px;height:28px;background:#e6e6fa"></div>
<div class="t" style="left:1340px;top:1043px;width:145.5px;text-align:right;font-size:16px;color:#000">0</div>
<div class="a" style="left:16px;top:1064px;width:1474px;height:2px;background:#b8b8b8"></div>
<div class="t" style="left:37px;top:1072px;font-size:16px;color:#000;letter-spacing:0.56px">Апт №003 пгт.Барышевка, ул.Киевский шлях,1</div>
<div class="t" style="left:412px;top:1072px;font-size:16px;color:#000">180</div>
<div class="t" style="left:591px;top:1072px;font-size:16px;color:#000;letter-spacing:0.6px">23.11.2023</div>
<div class="a" style="left:740px;top:1065px;width:148px;height:27px;background:#dcffdc"></div>
<div class="t" style="left:740px;top:1072px;width:145.5px;text-align:right;font-size:16px;color:#000">2496,85</div>
<div class="a" style="left:890px;top:1065px;width:148px;height:27px;background:#ffc896"></div>
<div class="t" style="left:890px;top:1072px;width:145.5px;text-align:right;font-size:16px;color:#000">2496,85</div>
<div class="t" style="left:1041px;top:1072px;font-size:16px;color:#000;letter-spacing:0.6px">23.11.2023</div>
<div class="a" style="left:1340px;top:1065px;width:148px;height:27px;background:#e6e6fa"></div>
<div class="t" style="left:1340px;top:1072px;width:145.5px;text-align:right;font-size:16px;color:#000">0</div>
<div class="a" style="left:16px;top:1092px;width:1474px;height:2px;background:#b8b8b8"></div>
<div class="t" style="left:37px;top:1101px;font-size:16px;color:#000">Адверсо ООО</div>
<div class="t" style="left:412px;top:1101px;font-size:16px;color:#000">182</div>
<div class="t" style="left:591px;top:1101px;font-size:16px;color:#000;letter-spacing:0.6px">05.12.2023</div>
<div class="a" style="left:740px;top:1094px;width:148px;height:27px;background:#dcffdc"></div>
<div class="t" style="left:740px;top:1101px;width:145.5px;text-align:right;font-size:16px;color:#000">81,31</div>
<div class="a" style="left:890px;top:1094px;width:148px;height:27px;background:#ffc896"></div>
<div class="t" style="left:890px;top:1101px;width:145.5px;text-align:right;font-size:16px;color:#000">81,31</div>
<div class="t" style="left:1041px;top:1101px;font-size:16px;color:#000;letter-spacing:0.6px">05.12.2023</div>
<div class="a" style="left:1340px;top:1094px;width:148px;height:27px;background:#e6e6fa"></div>
<div class="t" style="left:1340px;top:1101px;width:145.5px;text-align:right;font-size:16px;color:#000">0</div>
<div class="a" style="left:16px;top:1121px;width:1474px;height:2px;background:#b8b8b8"></div>
<div class="t" style="left:37px;top:1129px;font-size:16px;color:#000;letter-spacing:0.56px">Апт №003 пгт.Барышевка, ул.Киевский шлях,1</div>
<div class="t" style="left:412px;top:1129px;font-size:16px;color:#000">184</div>
<div class="t" style="left:591px;top:1129px;font-size:16px;color:#000;letter-spacing:0.6px">07.12.2023</div>
<div class="a" style="left:740px;top:1122px;width:148px;height:27px;background:#dcffdc"></div>
<div class="t" style="left:740px;top:1129px;width:145.5px;text-align:right;font-size:16px;color:#000">53,5</div>
<div class="a" style="left:890px;top:1122px;width:148px;height:27px;background:#ffc896"></div>
<div class="t" style="left:890px;top:1129px;width:145.5px;text-align:right;font-size:16px;color:#000">53,5</div>
<div class="t" style="left:1041px;top:1129px;font-size:16px;color:#000;letter-spacing:0.6px">07.12.2023</div>
<div class="a" style="left:1340px;top:1122px;width:148px;height:27px;background:#e6e6fa"></div>
<div class="t" style="left:1340px;top:1129px;width:145.5px;text-align:right;font-size:16px;color:#000">0</div>
<div class="a" style="left:16px;top:1149px;width:1474px;height:2px;background:#b8b8b8"></div>
<div class="t" style="left:37px;top:1157px;font-size:16px;color:#000;letter-spacing:0.56px">Апт №003 пгт.Барышевка, ул.Киевский шлях,1</div>
<div class="t" style="left:412px;top:1157px;font-size:16px;color:#000">186</div>
<div class="t" style="left:591px;top:1157px;font-size:16px;color:#000;letter-spacing:0.6px">08.12.2023</div>
<div class="a" style="left:740px;top:1150px;width:148px;height:28px;background:#dcffdc"></div>
<div class="t" style="left:740px;top:1157px;width:145.5px;text-align:right;font-size:16px;color:#000">1080</div>
<div class="a" style="left:890px;top:1150px;width:148px;height:28px;background:#ffc896"></div>
<div class="t" style="left:890px;top:1157px;width:145.5px;text-align:right;font-size:16px;color:#000">1080</div>
<div class="t" style="left:1041px;top:1157px;font-size:16px;color:#000;letter-spacing:0.6px">08.12.2023</div>
<div class="a" style="left:1340px;top:1150px;width:148px;height:28px;background:#e6e6fa"></div>
<div class="t" style="left:1340px;top:1157px;width:145.5px;text-align:right;font-size:16px;color:#000">0</div>
<div class="a" style="left:16px;top:1178px;width:1474px;height:2px;background:#b8b8b8"></div>
<div class="t" style="left:37px;top:1186px;font-size:16px;color:#000;letter-spacing:0.56px">Апт №003 пгт.Барышевка, ул.Киевский шлях,1</div>
<div class="t" style="left:412px;top:1186px;font-size:16px;color:#000">185</div>
<div class="t" style="left:591px;top:1186px;font-size:16px;color:#000;letter-spacing:0.6px">08.12.2023</div>
<div class="a" style="left:740px;top:1179px;width:148px;height:27px;background:#dcffdc"></div>
<div class="t" style="left:740px;top:1186px;width:145.5px;text-align:right;font-size:16px;color:#000">0</div>
<div class="a" style="left:890px;top:1179px;width:148px;height:27px;background:#ffc896"></div>
<div class="t" style="left:890px;top:1186px;width:145.5px;text-align:right;font-size:16px;color:#000">0</div>
<div class="t" style="left:1041px;top:1186px;font-size:16px;color:#000;letter-spacing:0.6px">08.12.2023</div>
<div class="a" style="left:1340px;top:1179px;width:148px;height:27px;background:#e6e6fa"></div>
<div class="t" style="left:1340px;top:1186px;width:145.5px;text-align:right;font-size:16px;color:#000">0</div>
<div class="a" style="left:16px;top:1206px;width:1474px;height:2px;background:#b8b8b8"></div>
<div class="t" style="left:37px;top:1215px;font-size:16px;color:#000;letter-spacing:0.56px">Апт №003 пгт.Барышевка, ул.Киевский шлях,1</div>
<div class="t" style="left:412px;top:1215px;font-size:16px;color:#000">186</div>
<div class="t" style="left:591px;top:1215px;font-size:16px;color:#000;letter-spacing:0.6px">08.12.2023</div>
<div class="a" style="left:740px;top:1208px;width:148px;height:27px;background:#dcffdc"></div>
<div class="a" style="left:890px;top:1208px;width:148px;height:27px;background:#ffc896"></div>
<div class="t" style="left:890px;top:1215px;width:145.5px;text-align:right;font-size:16px;color:#000">0</div>
<div class="t" style="left:1041px;top:1215px;font-size:16px;color:#000;letter-spacing:0.6px">08.12.2023</div>
<div class="a" style="left:1340px;top:1208px;width:148px;height:27px;background:#e6e6fa"></div>
<div class="t" style="left:1340px;top:1215px;width:145.5px;text-align:right;font-size:16px;color:#000">0</div>
<div class="a" style="left:16px;top:1235px;width:1474px;height:2px;background:#b8b8b8"></div>
<div class="t" style="left:37px;top:1243px;font-size:16px;color:#000;letter-spacing:0.56px">Апт №003 пгт.Барышевка, ул.Киевский шлях,1</div>
<div class="t" style="left:412px;top:1243px;font-size:16px;color:#000">185</div>
<div class="t" style="left:591px;top:1243px;font-size:16px;color:#000;letter-spacing:0.6px">08.12.2023</div>
<div class="a" style="left:740px;top:1236px;width:148px;height:27px;background:#dcffdc"></div>
<div class="a" style="left:890px;top:1236px;width:148px;height:27px;background:#ffc896"></div>
<div class="t" style="left:890px;top:1243px;width:145.5px;text-align:right;font-size:16px;color:#000">0</div>
<div class="t" style="left:1041px;top:1243px;font-size:16px;color:#000;letter-spacing:0.6px">08.12.2023</div>
<div class="a" style="left:1340px;top:1236px;width:148px;height:27px;background:#e6e6fa"></div>
<div class="t" style="left:1340px;top:1243px;width:145.5px;text-align:right;font-size:16px;color:#000">0</div>
<div class="a" style="left:16px;top:1261px;width:1474px;height:3px;background:#a6a6a6"></div>
<div class="a" style="left:35px;top:267px;width:1455px;height:27px;border-top:1.5px dotted #d8843c;border-bottom:1.5px dotted #d8843c"></div>
<svg class="a" style="left:21px;top:274px" width="9" height="14" viewBox="0 0 9 14"><path d="M1 0L8 7L1 14Z" fill="#000"/></svg>
<div class="a" style="left:33px;top:267px;width:2px;height:997px;background:#b8b8b8"></div>
<div class="a" style="left:408px;top:267px;width:2px;height:997px;background:#b8b8b8"></div>
<div class="a" style="left:588px;top:267px;width:2px;height:997px;background:#b8b8b8"></div>
<div class="a" style="left:738px;top:267px;width:2px;height:997px;background:#b8b8b8"></div>
<div class="a" style="left:888px;top:267px;width:2px;height:997px;background:#b8b8b8"></div>
<div class="a" style="left:1038px;top:267px;width:2px;height:997px;background:#b8b8b8"></div>
<div class="a" style="left:1188px;top:267px;width:2px;height:997px;background:#b8b8b8"></div>
<div class="a" style="left:1338px;top:267px;width:2px;height:997px;background:#b8b8b8"></div>
<div class="a" style="left:1488px;top:267px;width:2px;height:997px;background:#b8b8b8"></div>
<div class="a" style="left:16px;top:1264px;width:1474px;height:32px;background:#eeeeee"></div>
<div class="a" style="left:1488px;top:1264px;width:2px;height:32px;background:#b0b0b0"></div>
<div class="a" style="left:33px;top:1264px;width:2px;height:32px;background:#c8c8c8"></div>
<div class="a" style="left:741px;top:1266px;width:147px;height:28px;background:#e7e9e9;border:1px solid #d6d8d8"></div>
<div class="t" style="left:741px;top:1273px;width:144px;text-align:right;font-size:16px;color:#000;letter-spacing:0.4px;margin-right:-0.4px">73673,07</div>
<div class="a" style="left:891px;top:1266px;width:147px;height:28px;background:#e7e9e9;border:1px solid #d6d8d8"></div>
<div class="t" style="left:891px;top:1273px;width:144px;text-align:right;font-size:16px;color:#000;letter-spacing:0.4px;margin-right:-0.4px">73651,67</div>
<div class="a" style="left:1342px;top:1266px;width:146px;height:28px;background:#e7e9e9;border:1px solid #d6d8d8"></div>
<div class="t" style="left:1342px;top:1273px;width:143px;text-align:right;font-size:16px;color:#000;letter-spacing:0.4px;margin-right:-0.4px">21,40</div>
<div class="a" style="left:2125px;top:240px;width:24px;height:1056px;background:#efefef"></div>
<div class="a" style="left:2126px;top:240px;width:22px;height:386px;background:#cdcdcd"></div>
<svg class="a" style="left:2131px;top:1279px" width="12" height="12" viewBox="0 0 12 12"><path d="M1.2 2L6 8L10.8 2" fill="none" stroke="#5a5a5a" stroke-width="3"/></svg>
<div class="a" style="left:2149px;top:240px;width:3px;height:1056px;background:#fafafa"></div>
<div class="a" style="left:2152px;top:240px;width:5px;height:1056px;background:#eeeeee"></div>
<div class="a" style="left:11px;top:1296px;width:2141px;height:4px;background:#a4a4a4"></div>
<div class="a" style="left:11px;top:1299px;width:2141px;height:1px;background:#a0a0a0"></div>
<div class="a" style="left:8px;top:1313px;width:187px;height:35px;border:2px solid #111;background:#a8a8a8"></div>
<div class="t" style="left:12px;top:1322px;font-size:16.5px;color:#161616">Головна</div>
<div class="a" style="left:197px;top:1313px;width:189px;height:35px;border:2px solid #2a64a0;background:#bb9679"></div>
<div class="t" style="left:201px;top:1322px;font-size:16.5px;color:#161616">Звіт [Графік пропла ...</div>
<div class="a" style="left:0;top:1351px;width:2164px;height:1px;background:#999999"></div>
<div class="a" style="left:0;top:1352px;width:2164px;height:27px;background:#a9a9a9"></div>
<div class="a" style="left:0;top:1379px;width:2164px;height:2px;background:#000"></div>
<div class="a" style="left:300px;top:1354px;width:1px;height:25px;background:#999"></div>
<div class="a" style="left:606px;top:1354px;width:1px;height:25px;background:#999"></div>
<div class="a" style="left:665px;top:1354px;width:1px;height:25px;background:#999"></div>
<div class="a" style="left:1121px;top:1354px;width:1px;height:25px;background:#999"></div>
<div class="t" style="left:32px;top:1359px;font-size:16.5px;color:#161616">База даних: TASA3@TITAN</div>
<div class="t" style="left:330px;top:1359px;font-size:16.5px;color:#161616">Користувач: GIFT</div>
<div class="t" style="left:637px;top:1359px;font-size:16.5px;color:#161616">4</div>
<div class="t" style="left:668px;top:1359px;font-size:16.5px;color:#161616">Кассовый аппарат не подключен</div>
<div class="t" style="left:1125px;top:1359px;font-size:16.5px;color:#161616">Зона: Склад [1]</div>
<svg class="a" style="left:7px;top:1357px" width="19" height="22" viewBox="0 0 19 22"><defs><linearGradient id="dbg" x1="0" y1="0" x2="1" y2="1"><stop offset="0" stop-color="#8c8cae"/><stop offset="1" stop-color="#4a4a6e"/></linearGradient></defs><path d="M1 2Q1 0.5 3 0.5H15Q18 0.5 18 3V18Q18 20.5 15 20.5H5Q1 20.5 1 17Z" fill="url(#dbg)"/><path d="M2 7.3H18M2 11H18M2 14.7H18" stroke="#1552a0" stroke-width="1.8"/></svg>
<svg class="a" style="left:306px;top:1356px" width="18" height="23" viewBox="0 0 18 23"><circle cx="6.5" cy="6.5" r="5.5" fill="#b02a14"/><ellipse cx="10" cy="8.8" rx="4.6" ry="5.3" fill="#7a7eb2"/><path d="M6.5 13Q10 14.5 13.5 13L10.5 16Z" fill="#c27a3a"/><path d="M1.8 22.5Q1.5 15.5 6.5 14.2L10 16.5L13.5 14.2Q18.5 15.5 18.2 22.5Z" fill="#7f82b0"/><path d="M8 17.5L10 22L12 17.5" fill="#a4a6c4"/></svg>
<svg class="a" style="left:610px;top:1355px" width="21" height="24" viewBox="0 0 21 24"><path d="M0.5 7L4 4.5H18L20 7V19H0.5Z" fill="#5d5d92"/><path d="M0.5 7L4 4.5H18L20 7V11H0.5Z" fill="#7c7ca6"/><path d="M16 0.5L19.5 6" stroke="#3a3a3a" stroke-width="1.5"/><path d="M4.5 21.5L7 12" stroke="#c8b040" stroke-width="2.5"/><path d="M13.5 23L15.5 15" stroke="#c8b040" stroke-width="2.5"/></svg>
<div class="a" style="left:0;top:0;width:3px;height:1381px;background:#000"></div>
<div class="a" style="left:3px;top:240px;width:2px;height:1056px;background:#a9a9a9"></div>
<div class="a" style="left:2157px;top:182px;width:5px;height:1169px;background:#a9a9a9"></div>
<div class="a" style="left:2162px;top:0;width:2px;height:1381px;background:#000"></div></body></html>
